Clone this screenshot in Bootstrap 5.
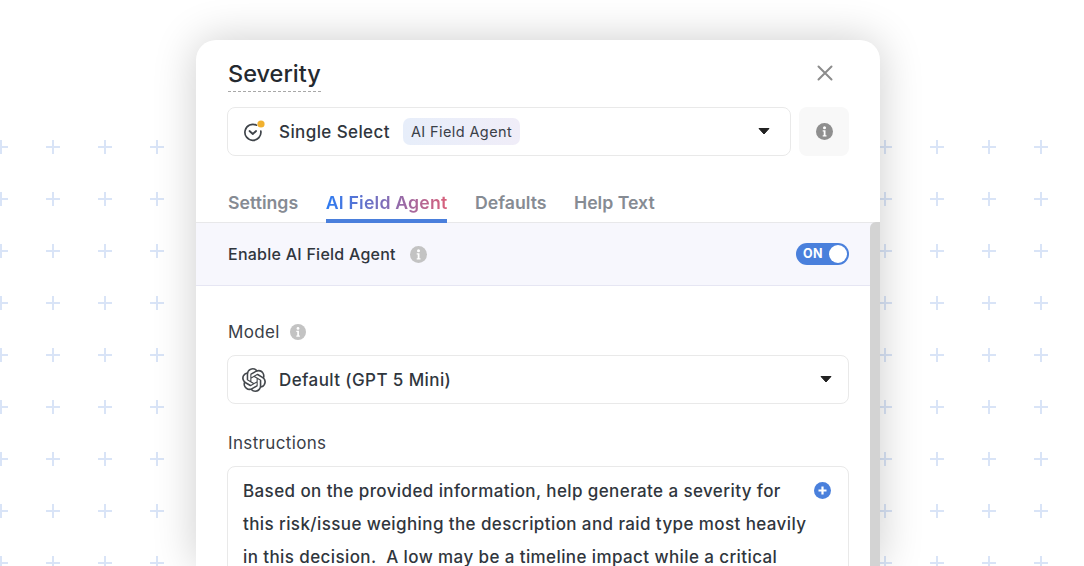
<!DOCTYPE html>
<html lang="en">
<head>
    <meta charset="UTF-8">
    <meta name="viewport" content="width=device-width, initial-scale=1.0">
    <title>Severity</title>
    <link href="https://cdn.jsdelivr.net/npm/bootstrap@5.3.0/dist/css/bootstrap.min.css" rel="stylesheet">
    <style>
        html, body { height: 566px; overflow: hidden; }
        body { background: #fff; font-family: "Inter", "Liberation Sans", sans-serif; color: #30363d; position: relative; }

        .plus-field { position: absolute; left: 0; top: 0; width: 100%; height: 100%; }

        .field-modal {
            position: relative;
            width: 684px;
            height: 526px;
            margin: 40px 0 0 196px;
            background: #fff;
            border-radius: 20px 20px 0 0;
            box-shadow: 0 0 44px rgba(0, 0, 0, .2);
            overflow: hidden;
        }

        .modal-top { padding: 16px 31px 0 31px; }
        .field-title {
            font-size: 23.5px; font-weight: 500; line-height: 35px; color: #24292f;
            border-bottom: 1px dashed #a8a8a8; margin-left: 1px;
        }
        .close-x { margin: 8px 15px 0 0; }

        .picker {
            height: 49px;
            border: 1.5px solid #e9e9e9;
            border-radius: 8px;
            background: #fff;
            padding: 0 14px;
            font-size: 17px;
            font-weight: 500;
            letter-spacing: .4px;
        }
        .picker-top { margin-top: 15px; }
        .picker-model { margin-top: 11px; }
        .picker-icon { width: 22px; margin-right: 15px; }
        .picker-icon svg { overflow: visible; }
        .picker-text { padding-top: 2px; }
        .caret-top { margin-right: 6px; }
        .caret-model { margin-right: 2px; }
        .agent-chip {
            font-size: 14.5px; font-weight: 400; line-height: 27px; padding: 0 8px;
            margin-left: 13px; border-radius: 7px; color: #3a4048;
            background: linear-gradient(90deg, #e7eefa, #f0edf8);
        }
        .info-box { width: 50px; height: 49px; background: #f8f8f8; border-radius: 8px; margin-left: 8px; }

        .tab-row { gap: 27.5px; margin-top: 28px; padding: 0 31px 0 32px; border-bottom: 1px solid #e8e8ea; height: 39px; }
        .tab-item { font-size: 17.7px; font-weight: 600; color: #868b93; line-height: 38px; height: 39px; }
        .tab-on { border-bottom: 4px solid #4a7fdc; letter-spacing: .2px; }
        .tab-on span {
            background: linear-gradient(90deg, #2c7bf2, #d8607a);
            -webkit-background-clip: text; background-clip: text; color: transparent;
        }

        .agent-band {
            height: 63px; padding: 0 31px 0 32px; background: #f7f7fd;
            border-bottom: 1px solid #e6e6f3; font-size: 16px; font-weight: 500; letter-spacing: .25px;
        }
        .band-info { margin-left: 14px; }
        .toggle-on {
            width: 53px; height: 22px; background: #4a80dc; border-radius: 11px;
            padding: 0 2px 0 7px; color: #fff; font-size: 12.5px; font-weight: 700;
        }
        .toggle-knob { width: 18px; height: 18px; background: #fff; border-radius: 50%; }

        .form-part { padding: 0 31px; }
        .field-label { font-size: 17px; line-height: 24px; color: #3a4048; letter-spacing: .35px; margin-left: 1px; }
        .label-model { margin-top: 34px; }
        .label-prompt { margin-top: 27px; }
        .label-info { margin-left: 10px; }
        .prompt-box {
            position: relative;
            height: 200px;
            margin-top: 11px;
            border: 1.5px solid #e9e9e9;
            border-radius: 8px;
            padding: 8px 15px;
            font-size: 17px;
            font-weight: 500;
            letter-spacing: .4px;
            line-height: 33px;
            color: #30363d;
            white-space: pre-wrap;
        }
        .prompt-add { position: absolute; right: 17px; top: 15px; }

        .scroll-thumb {
            position: absolute; right: 0; top: 182px; width: 10px; height: 420px;
            background: #d3d3d3; border-radius: 6px 0 0 6px;
        }
    </style>
</head>
<body>
    <svg class="plus-field" aria-hidden="true">
        <defs>
            <pattern id="plusTile" x="-6" y="140" width="52" height="52" patternUnits="userSpaceOnUse">
                <path d="M0 7h14M7 0v14" stroke="#d9e4f7" stroke-width="2" fill="none"/>
            </pattern>
        </defs>
        <rect x="0" y="140" width="1084" height="426" fill="url(#plusTile)"/>
    </svg>

    <div class="field-modal">
        <div class="modal-top">
            <div class="d-flex justify-content-between align-items-start">
                <div class="field-title">Severity</div>
                <svg class="close-x" width="18" height="18" viewBox="0 0 18 18"><path d="M2.5 2.5l13 13M15.500 2.500l-13 13" stroke="#8c8c8c" stroke-width="2" stroke-linecap="round"/></svg>
            </div>
            <div class="d-flex picker-top">
                <div class="picker d-flex align-items-center flex-grow-1">
                    <span class="picker-icon d-flex">
                        <svg width="22" height="22" viewBox="0 0 22 22">
                            <path d="M14.500 4.200A8 8 0 1 0 18.800 10" fill="none" stroke="#3f444a" stroke-width="1.700" stroke-linecap="round"/>
                            <path d="M7.500 10l3.300 3 3.300-3" fill="none" stroke="#3f444a" stroke-width="1.800" stroke-linecap="round" stroke-linejoin="round"/>
                            <circle cx="19" cy="3" r="3.600" fill="#f1b12f"/>
                        </svg>
                    </span>
                    <span class="picker-text">Single Select</span>
                    <span class="agent-chip">AI Field Agent</span>
                    <svg class="ms-auto caret-top" width="12" height="7" viewBox="0 0 12 7"><path d="M1 .5h10L6 6z" fill="#222" stroke="#222" stroke-linejoin="round"/></svg>
                </div>
                <div class="info-box d-flex align-items-center justify-content-center">
                    <svg width="17" height="17" viewBox="0 0 17 17"><circle cx="8.500" cy="8.500" r="8.500" fill="#8f8f8f"/><circle cx="8.500" cy="4.700" r="1.500" fill="#fff"/><path d="M6.700 7.300h2.800v5h1v1.300H6.700v-1.300h1v-3.700h-1z" fill="#fff"/></svg>
                </div>
            </div>
        </div>

        <div class="tab-row d-flex">
            <div class="tab-item">Settings</div>
            <div class="tab-item tab-on"><span>AI Field Agent</span></div>
            <div class="tab-item">Defaults</div>
            <div class="tab-item">Help Text</div>
        </div>

        <div class="agent-band d-flex align-items-center justify-content-between">
            <div class="d-flex align-items-center">
                Enable AI Field Agent
                <svg class="band-info" width="17" height="17" viewBox="0 0 17 17"><circle cx="8.500" cy="8.500" r="8.500" fill="#c3c3c3"/><circle cx="8.500" cy="4.700" r="1.500" fill="#fff"/><path d="M6.700 7.300h2.800v5h1v1.300H6.700v-1.300h1v-3.700h-1z" fill="#fff"/></svg>
            </div>
            <div class="toggle-on d-flex align-items-center justify-content-between">
                <span>ON</span>
                <span class="toggle-knob"></span>
            </div>
        </div>

        <div class="form-part">
            <div class="field-label label-model d-flex align-items-center">
                Model
                <svg class="label-info" width="16" height="16" viewBox="0 0 17 17"><circle cx="8.500" cy="8.500" r="8.500" fill="#c3c3c3"/><circle cx="8.500" cy="4.700" r="1.500" fill="#fff"/><path d="M6.700 7.300h2.800v5h1v1.300H6.700v-1.300h1v-3.700h-1z" fill="#fff"/></svg>
            </div>
            <div class="picker picker-model d-flex align-items-center">
                <span class="picker-icon d-flex">
                    <svg width="24" height="24" viewBox="0 0 24 24"><path fill="#44484d" d="M22.2819 9.8211a5.9847 5.9847 0 0 0-.5157-4.9108 6.0462 6.0462 0 0 0-6.5098-2.9A6.0651 6.0651 0 0 0 4.9807 4.1818a5.9847 5.9847 0 0 0-3.9977 2.9 6.0462 6.0462 0 0 0 .7427 7.0966 5.98 5.98 0 0 0 .511 4.9107 6.051 6.051 0 0 0 6.5146 2.9001A5.9847 5.9847 0 0 0 13.2599 24a6.0557 6.0557 0 0 0 5.7718-4.2058 5.9894 5.9894 0 0 0 3.9977-2.9001 6.0557 6.0557 0 0 0-.7475-7.0729zm-9.022 12.6081a4.4755 4.4755 0 0 1-2.8764-1.0408l.1419-.0804 4.7783-2.7582a.7948.7948 0 0 0 .3927-.6813v-6.7369l2.02 1.1686a.071.071 0 0 1 .038.052v5.5826a4.504 4.504 0 0 1-4.4945 4.4944zm-9.6607-4.1254a4.4708 4.4708 0 0 1-.5346-3.0137l.142.0852 4.783 2.7582a.7712.7712 0 0 0 .7806 0l5.8428-3.3685v2.3324a.0804.0804 0 0 1-.0332.0615L9.74 19.9502a4.4992 4.4992 0 0 1-6.1408-1.6464zM2.3408 7.8956a4.485 4.485 0 0 1 2.3655-1.9728V11.6a.7664.7664 0 0 0 .3879.6765l5.8144 3.3543-2.0201 1.1685a.0757.0757 0 0 1-.071 0l-4.8303-2.7865A4.504 4.504 0 0 1 2.3408 7.872zm16.5963 3.8558L13.1038 8.364 15.1192 7.2a.0757.0757 0 0 1 .071 0l4.8303 2.7913a4.4944 4.4944 0 0 1-.6765 8.1042v-5.6772a.79.79 0 0 0-.407-.667zm2.0107-3.0231l-.142-.0852-4.7735-2.7818a.7759.7759 0 0 0-.7854 0L9.409 9.2297V6.8974a.0662.0662 0 0 1 .0284-.0615l4.8303-2.7866a4.4992 4.4992 0 0 1 6.6802 4.66zM8.3065 12.863l-2.02-1.1638a.0804.0804 0 0 1-.038-.0567V6.0742a4.4992 4.4992 0 0 1 7.3757-3.4537l-.142.0805L8.704 5.459a.7948.7948 0 0 0-.3927.6813zm1.0976-2.3654l2.602-1.4998 2.6069 1.4998v2.9994l-2.5974 1.4997-2.6067-1.4997Z"/></svg>
                </span>
                <span class="picker-text">Default (GPT 5 Mini)</span>
                <svg class="ms-auto caret-model" width="12" height="7" viewBox="0 0 12 7"><path d="M1 .5h10L6 6z" fill="#222" stroke="#222" stroke-linejoin="round"/></svg>
            </div>
            <div class="field-label label-prompt">Instructions</div>
            <div class="prompt-box">Based on the provided information, help generate a severity for
this risk/issue weighing the description and raid type most heavily
in this decision.  A low may be a timeline impact while a critical<svg class="prompt-add" width="17" height="17" viewBox="0 0 17 17"><circle cx="8.500" cy="8.500" r="8.500" fill="#4a80dc"/><path d="M8.500 4.500v8M4.500 8.500h8" stroke="#fff" stroke-width="2.200"/></svg></div>
        </div>

        <div class="scroll-thumb"></div>
    </div>
</body>
</html>
